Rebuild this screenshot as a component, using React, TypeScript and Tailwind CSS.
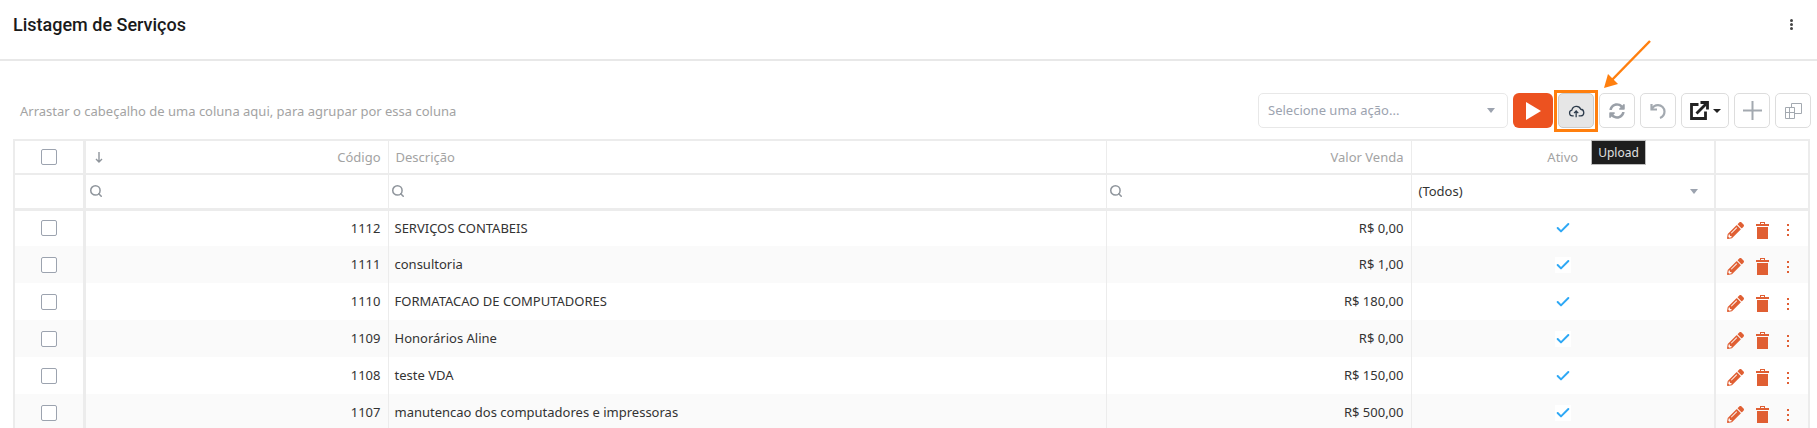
import React from 'react';
import { FaPencilAlt, FaSyncAlt } from 'react-icons/fa';
import { Check, Search } from 'lucide-react';

const ROWS = [
  { code: 1112, desc: 'SERVIÇOS CONTABEIS', price: 'R$ 0,00' },
  { code: 1111, desc: 'consultoria', price: 'R$ 1,00' },
  { code: 1110, desc: 'FORMATACAO DE COMPUTADORES', price: 'R$ 180,00' },
  { code: 1109, desc: 'Honorários Aline', price: 'R$ 0,00' },
  { code: 1108, desc: 'teste VDA', price: 'R$ 150,00' },
  { code: 1107, desc: 'manutencao dos computadores e impressoras', price: 'R$ 500,00' },
];

function Box() {
  return <div className="mx-auto w-[16px] h-[16px] rounded-[2px] border border-[#9ca3af] bg-white" />;
}

function ToolButton({ w, children }: { w: string; children: React.ReactNode }) {
  return (
    <button className={`${w} h-[35px] flex items-center justify-center rounded-[5px] border border-[#dddddd] bg-white`}>
      {children}
    </button>
  );
}

function FilterIcon() {
  return <Search size={14} strokeWidth={2.6} className="text-[#8f959c]" />;
}

export default function App() {
  return (
    <div className="relative h-[428px] overflow-hidden bg-white font-['Noto_Sans',sans-serif] text-[13px] text-[#333333]">
      <header className="h-[61px] border-b-2 border-[#e8e8e8] pl-[13px] pr-[24px] flex items-center justify-between pb-[11px]">
        <h1 className="font-['Roboto',sans-serif] font-medium text-[18px] text-[#1a1a1a]">Listagem de Serviços</h1>
        <div className="flex flex-col gap-[1px] text-[#444444]">
          <span className="w-[3px] h-[3px] rounded-full bg-current" />
          <span className="w-[3px] h-[3px] rounded-full bg-current" />
          <span className="w-[3px] h-[3px] rounded-full bg-current" />
        </div>
      </header>

      <div className="h-[78px] pl-[20px] pr-[6px] pt-[32px] flex items-start justify-between">
        <span className="mt-[9px] text-[#a3a3a3]">Arrastar o cabeçalho de uma coluna aqui, para agrupar por essa coluna</span>
        <div className="flex gap-[5px]">
          <div className="w-[250px] h-[35px] flex items-center justify-between rounded-[5px] border border-[#e8e8e8] pl-[9px] pr-[12px] text-[#9ca3af]">
            <span>Selecione uma ação...</span>
            <span className="w-0 h-0 border-x-[4px] border-x-transparent border-t-[5px] border-t-[#9ca3af]" />
          </div>
          <button className="w-[40px] h-[35px] flex items-center justify-center rounded-[6px] bg-[#ec5220]">
            <svg width="16" height="18" viewBox="0 0 16 18"><path d="M1 0L16 9L1 18Z" fill="#ffffff" /></svg>
          </button>
          <button className="w-[36px] h-[35px] flex items-center justify-center rounded-[5px] border border-[#cccccc] bg-[#e6e6e6]">
            <svg width="17" height="14" viewBox="0 0 24 20" fill="none" stroke="#2b3a4a" strokeWidth="1.8">
              <path d="M8 17H6a4.2 4.2 0 0 1-.6-8.3A6.6 6.6 0 0 1 18 7.5 4.8 4.8 0 0 1 18.5 17H15" />
              <path d="M11.5 19V10M8.5 13l3-3 3 3" />
            </svg>
          </button>
          <ToolButton w="w-[36px]"><FaSyncAlt size={16} className="text-[#9aa0a8]" /></ToolButton>
          <ToolButton w="w-[36px]">
            <svg width="18" height="18" viewBox="0 0 18 18" fill="none" stroke="#a3a9b0" strokeWidth="2.2">
              <path d="M2.5 2V7.5H8" />
              <path d="M2.8 7.2C4 4.6 6.3 3.2 9 3.2 12.6 3.2 15.5 6 15.5 9.6 15.5 12.4 13.6 15 11 16" />
            </svg>
          </ToolButton>
          <ToolButton w="w-[48px]">
            <svg width="21" height="21" viewBox="0 0 21 21" fill="none" stroke="#222222" strokeWidth="2.8">
              <path d="M9.5 4.5H2.5V18.5H16.5V11.5" />
              <path d="M7.5 13.5L17 4" />
              <path d="M11.5 2.5H18.5V9.5" />
            </svg>
            <span className="ml-[3px] w-0 h-0 border-x-[4px] border-x-transparent border-t-[4px] border-t-[#222222]" />
          </ToolButton>
          <ToolButton w="w-[36px]">
            <svg width="19" height="19" viewBox="0 0 19 19" fill="none" stroke="#a3a9b0" strokeWidth="2">
              <path d="M9.5 0V19M0 9.5H19" />
            </svg>
          </ToolButton>
          <ToolButton w="w-[36px]">
            <svg width="17" height="16" viewBox="0 0 17 16" fill="none" stroke="#a3a9b0" strokeWidth="1">
              <path d="M6.5 4.5V0.5H16.5V10.5H10" />
              <path d="M0.5 4.5H9.5V15.5H0.5Z" />
              <path d="M0.5 9.5H9.5M4.5 4.5V15.5" />
            </svg>
          </ToolButton>
        </div>
      </div>

      <div className="ml-[13px] w-[1797px] border-t-2 border-r-2 border-l-2 border-[#ececec]">
        <table className="w-full table-fixed border-collapse">
          <colgroup>
            <col className="w-[69px]" />
            <col className="w-[304px]" />
            <col className="w-[718px]" />
            <col className="w-[305px]" />
            <col className="w-[304px]" />
            <col />
          </colgroup>
          <thead className="text-[#a3a3a3]">
            <tr className="h-[33px] border-b-2 border-[#ececec]">
              <th className="border-r-[3px] border-[#ececec]"><Box /></th>
              <th className="border-r border-[#ececec] pl-[9px] pr-[7px] pt-[1px] font-normal">
                <div className="flex items-center justify-between">
                  <svg width="8" height="11" viewBox="0 0 8 11" fill="none" stroke="#8f959c" strokeWidth="1.4">
                    <path d="M4 0V10M1 7L4 10L7 7" />
                  </svg>
                  <span>Código</span>
                </div>
              </th>
              <th className="border-r border-[#ececec] px-[7px] pt-[1px] text-left font-normal">Descrição</th>
              <th className="border-r border-[#ececec] px-[7px] pt-[1px] text-right font-normal">Valor Venda</th>
              <th className="border-r-[2px] border-[#ececec] pt-[1px] font-normal">Ativo</th>
              <th />
            </tr>
            <tr className="h-[35px] border-b-[3px] border-[#ececec]">
              <th className="border-r-[3px] border-[#ececec]" />
              <th className="border-r border-[#ececec] pl-[3px]"><FilterIcon /></th>
              <th className="border-r border-[#ececec] pl-[2px]"><FilterIcon /></th>
              <th className="border-r border-[#ececec] pl-[2px]"><FilterIcon /></th>
              <th className="border-r-[2px] border-[#ececec] pl-[7px] pr-[16px] font-normal text-[#333333]">
                <div className="flex items-center justify-between">
                  <span>(Todos)</span>
                  <span className="w-0 h-0 border-x-[4px] border-x-transparent border-t-[5px] border-t-[#9ca3af]" />
                </div>
              </th>
              <th />
            </tr>
          </thead>
          <tbody>
            {ROWS.map((row, i) => (
              <tr key={row.code} className={`h-[37px] ${i % 2 === 1 ? 'bg-[#fafafa]' : 'bg-white'}`}>
                <td className="border-r-[3px] border-[#ececec]"><Box /></td>
                <td className="border-r border-[#ececec] px-[7px] text-right">{row.code}</td>
                <td className="border-r border-[#ececec] px-[6px]">{row.desc}</td>
                <td className="border-r border-[#ececec] px-[7px] text-right">{row.price}</td>
                <td className="border-r-[2px] border-[#ececec]">
                  <div className={`mx-auto w-[16px] h-[16px] flex items-center justify-center ${i % 2 === 1 ? 'bg-white' : ''}`}>
                    <Check size={16} strokeWidth={3} className="text-[#2ea8f5]" />
                  </div>
                </td>
                <td className="pl-[11px]">
                  <div className="flex items-center text-[#e05f33] pt-[4px]">
                    <FaPencilAlt size={17} />
                    <svg className="ml-[12px]" width="13" height="17" viewBox="0 0 13 17" fill="currentColor">
                      <path d="M4 0H9V2H13V4H0V2H4ZM5 1V2H8V1Z" fillRule="evenodd" />
                      <path d="M1 5H12V17H1Z" />
                    </svg>
                    <div className="ml-[18px] flex flex-col gap-[3px]">
                      <span className="w-[2px] h-[2px] bg-current" />
                      <span className="w-[2px] h-[2px] bg-current" />
                      <span className="w-[2px] h-[2px] bg-current" />
                    </div>
                  </div>
                </td>
              </tr>
            ))}
          </tbody>
        </table>
      </div>

      {/* highlight added on top of the screenshot */}
      <div className="absolute left-[1554px] top-[90px] w-[44px] h-[42px] border-[3px] border-[#ff7f0e]" />
      <svg className="absolute left-[1595px] top-[35px]" width="60" height="60" viewBox="0 0 60 60" fill="none">
        <path d="M55 6L14 48" stroke="#ff7f0e" strokeWidth="2.5" />
        <path d="M9 53L13 39L23 49Z" fill="#ff7f0e" />
      </svg>
      <div className="absolute left-[1591px] top-[140px] w-[55px] h-[25px] flex items-center justify-center bg-[#1e1e1e] border border-[#bdbdbd] text-[12px] text-[#e0e0e0]">
        Upload
      </div>
    </div>
  );
}
